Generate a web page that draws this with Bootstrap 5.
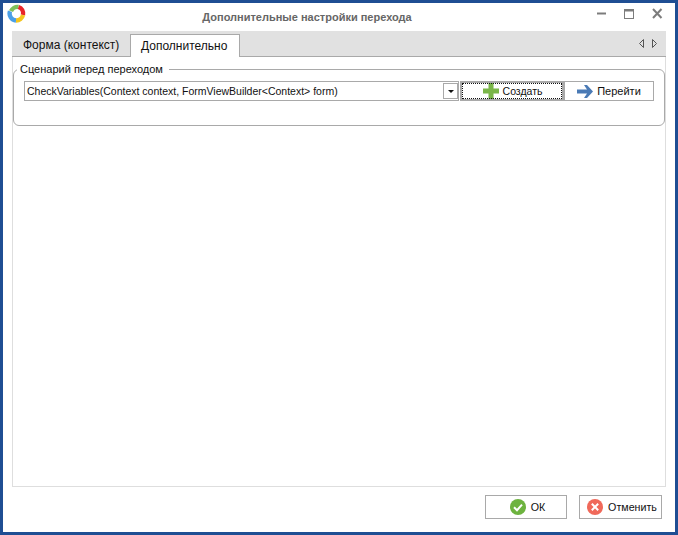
<!DOCTYPE html>
<html lang="ru">
<head>
<meta charset="utf-8">
<title>Дополнительные настройки перехода</title>
<link href="https://cdn.jsdelivr.net/npm/bootstrap@5.3.0/dist/css/bootstrap.min.css" rel="stylesheet">
<style>
html,body{height:100%;margin:0;background:#fff}
body{font-family:"Liberation Sans",Arial,sans-serif;font-size:11px;color:#111}
.win{width:678px;height:535px;border:3px solid #1f4e93;background:#fff;display:flex;flex-direction:column}
.titlebar{height:28px;flex:none;position:relative}
.logo{position:absolute;left:4px;top:1px}
.wintitle{font-weight:700;font-size:11px;color:#666;padding-top:6px;padding-right:64px}
.winbtns{position:absolute;right:0;top:0}
.tabbox{margin:0 9px;flex:1;display:flex;flex-direction:column;min-height:0}
.tabstrip{height:26px;flex:none;background:#e1e1e1;border-bottom:1px solid #a9a9a9;display:flex;align-items:flex-end;padding-left:1px}
.tabitem{font-size:12px;line-height:14px}
.tabfirst{width:117px;padding:5px 0 3px 10px;align-self:flex-end;height:23px}
.tabon{background:#fff;border:1px solid #a9a9a9;border-bottom:0;height:23px;margin-bottom:-1px;width:110px;padding:4px 0 0 10px}
.scrollers{margin-left:auto;margin-right:4px;align-self:flex-start}
.tabbody{flex:1;border:1px solid #dedede;border-top:0;display:flex;flex-direction:column;padding:6px 0 0;min-height:0}
.groupset{border:1px solid #a9a9a9;border-radius:6px;height:64px;margin:-1px 0 0;padding:0 10px;min-width:0}
.groupset legend{float:none;width:auto;font-size:11px;margin:-8px 0 0 -7px;padding:0 6px 0 3px;line-height:14px;color:#111;height:14px}
.grouprow{display:flex;align-items:stretch;height:20px;margin-top:5px}
.combo{width:435px;border:1px solid #a9a9a9;display:flex;align-items:center;padding-left:2px;background:#fff;justify-content:space-between;white-space:nowrap;font-size:10.5px}
.combotext,.maketext{padding-top:1px}
.dropbtn{width:15px;height:16px;border:1px solid #a9a9a9;display:flex;align-items:center;justify-content:center}
.caretglyph{width:0;height:0;border:3px solid transparent;border-top:3px solid #111;border-bottom:0}
.actbtn{background:#fff;display:flex;align-items:center;justify-content:center;gap:4px}
.makebtn{width:104px;margin-left:1px;border:2px solid #a9a9a9;outline:1px dotted #111;outline-offset:-3px;font-size:10.5px;padding-left:1px}
.gobtn{width:90px;border:1px solid #a9a9a9;font-size:11px}
.footbar{height:45px;flex:none;display:flex;justify-content:flex-end;align-items:flex-start;padding:8px 13px 0 0;gap:12px}
.footbtn{height:24px;border:1px solid #a9a9a9;background:#fff;display:flex;align-items:center;justify-content:center;gap:5px;font-size:10.7px;padding-left:3px}
.okbtn{width:82px}.nobtn{width:83px}
</style>
</head>
<body class="overflow-hidden">
<div class="win">
  <div class="titlebar text-center">
    <svg class="logo" width="19" height="19" viewBox="0 0 19 19" fill="none" stroke-width="4.4">
      <path d="M4 7.200A7 7 0 0 1 11.500 3" stroke="#7fc05a"/>
      <path d="M11.500 3A7 7 0 0 1 16 11" stroke="#e8242a"/>
      <path d="M16 11A7 7 0 0 1 9 16.500" stroke="#f4c51e"/>
      <path d="M9 16.500A7 7 0 0 1 3 7.200" stroke="#4a9fe6"/>
    </svg>
    <div class="wintitle">Дополнительные настройки перехода</div>
    <svg class="winbtns" width="110" height="28" viewBox="0 0 110 28" fill="none" stroke="#7c7c7c">
      <path d="M32 10.500h9" stroke-width="2"/>
      <rect x="59.500" y="6.500" width="9" height="9"/><path d="M59 7.500h10" stroke-width="2"/>
      <path d="M88 6l8.500 9M96.500 6L88 15" stroke-width="2"/>
    </svg>
  </div>
  <div class="tabbox">
    <div class="tabstrip">
      <div class="tabitem tabfirst">Форма (контекст)</div>
      <div class="tabitem tabon">Дополнительно</div>
      <svg class="scrollers" width="30" height="24" viewBox="0 0 30 24" fill="none" stroke="#555"><path d="M11.500 8.500l-4 4 4 4zM20.500 8.500l4 4-4 4z"/></svg>
    </div>
    <div class="tabbody">
      <fieldset class="groupset">
        <legend>Сценарий перед переходом</legend>
        <div class="grouprow">
          <div class="combo"><span class="combotext">CheckVariables(Context context, FormViewBuilder&lt;Context&gt; form)</span><span class="dropbtn"><span class="caretglyph"></span></span></div>
          <div class="actbtn makebtn">
            <svg width="16" height="16" viewBox="0 0 16 16"><path d="M5.500 0h5v5.500H16v5h-5.500V16h-5v-5.500H0v-5h5.500z" fill="#7ab648"/></svg><span class="maketext">Создать</span>
          </div>
          <div class="actbtn gobtn">
            <svg width="16" height="13" viewBox="0 0 16 13"><path d="M0 4.500h10L7 0h3l6 6.500L10 13H7l3-4.500H0z" fill="#4a7ab5"/></svg><span>Перейти</span>
          </div>
        </div>
      </fieldset>
    </div>
  </div>
  <div class="footbar">
    <div class="footbtn okbtn">
      <svg width="16" height="16" viewBox="0 0 16 16"><circle cx="8" cy="8" r="8" fill="#6db33f"/><path d="M4 8.200l3 3 5-5.500" fill="none" stroke="#fff" stroke-width="2"/></svg><span>ОК</span>
    </div>
    <div class="footbtn nobtn">
      <svg width="16" height="16" viewBox="0 0 16 16"><circle cx="8" cy="8" r="8" fill="#f0695a"/><path d="M4.800 4.800l6.400 6.400M11.200 4.800l-6.400 6.400" fill="none" stroke="#fff" stroke-width="2"/></svg><span>Отменить</span>
    </div>
  </div>
</div>
<script src="https://cdn.jsdelivr.net/npm/bootstrap@5.3.0/dist/js/bootstrap.bundle.min.js"></script>
</body>
</html>
